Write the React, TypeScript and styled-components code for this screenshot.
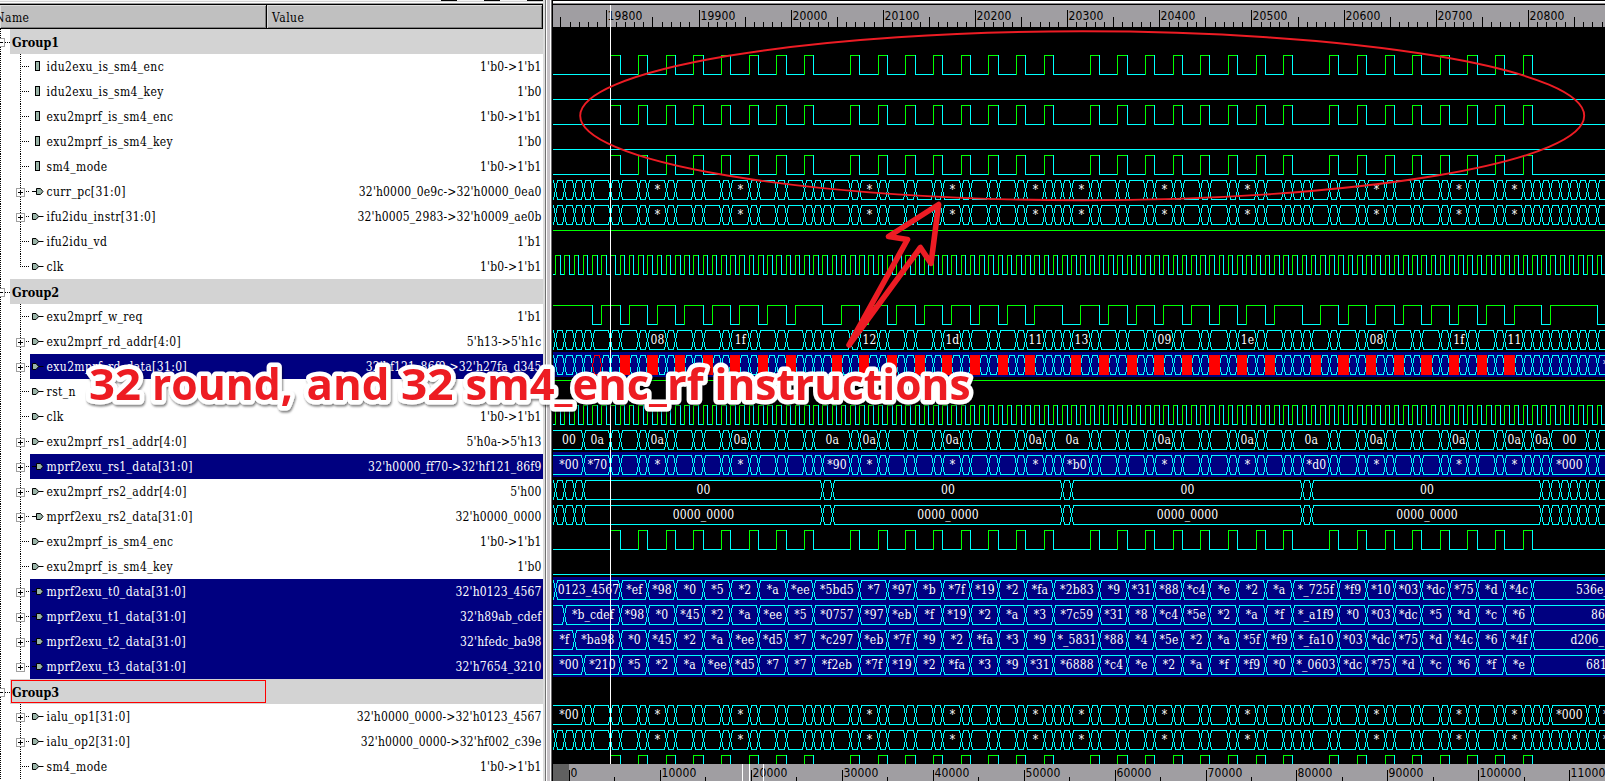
import React from "react";
import styled, { createGlobalStyle } from "styled-components";

const SERIF = '"DejaVu Serif Condensed", "DejaVu Serif", serif';
const SANS = '"DejaVu Sans Condensed", "DejaVu Sans", sans-serif';
const CYAN = "#00ffff";
const GREEN = "#00ff00";
const RED = "#ff0000";
const NAVY = "#000080";

const GlobalStyle = createGlobalStyle`
  html, body { margin: 0; padding: 0; background: #000; overflow: hidden; }
  * { box-sizing: border-box; }
`;

const Window = styled.div`
  position: relative;
  display: flex;
  width: 1605px;
  height: 781px;
  overflow: hidden;
  background: #fff;
`;

/* ---------- signal tree ---------- */

const TreePane = styled.div`
  flex: none;
  width: 543px;
  height: 781px;
  overflow: hidden;
  display: flex;
  flex-direction: column;
  font-family: ${SERIF};
  font-stretch: condensed;
  font-size: 12px;
  color: #000;
`;

const ToolEdge = styled.div`
  flex: none;
  height: 4px;
  display: flex;
  justify-content: flex-end;
  gap: 27px;
  background: linear-gradient(#f4f4f4 0 1px, #d2d2d2 1px 2px, #fff 2px 3px, #9a9a9a 3px 4px);
`;

const ToolStub = styled.span`
  width: 16px;
  height: 1px;
  background: #000;
`;

const Header = styled.div`
  flex: none;
  display: flex;
  height: 25px;
  border-top: 1px solid #000;
  border-bottom: 1px solid #000;
`;

const HeaderCell = styled.div<{ $w: number; $pad: number }>`
  width: ${(p) => p.$w}px;
  padding-left: ${(p) => p.$pad}px;
  line-height: 26px;
  letter-spacing: 0.5px;
  background: #c0c0c0;
  border-right: 1px solid #000;
  box-shadow: inset 1px 1px 0 #dcdcdc, inset -1px -1px 0 #808080;
  white-space: nowrap;
`;

const HeaderText = styled.span<{ $shift?: number }>`
  display: inline-block;
  margin-left: ${(p) => p.$shift ?? 0}px;
`;

const TreeRow = styled.div`
  flex: none;
  display: flex;
  height: 25px;
  background: repeating-linear-gradient(#000 0 1px, transparent 1px 2px) 0 0 / 1px 100% no-repeat;
`;

const GroupGutter = styled.div`
  position: relative;
  flex: none;
  width: 10px;
  overflow: hidden;
  background: repeating-linear-gradient(90deg, transparent 0 1px, #000 1px 2px) 4px 13px / 6px 1px no-repeat;
`;

const GroupTitle = styled.div<{ $active?: boolean }>`
  flex: none;
  width: 255px;
  height: 23px;
  margin-top: 1px;
  margin-left: 1px;
  padding-left: 0;
  line-height: 23px;
  font-weight: 700;
  font-size: 12.5px;
  letter-spacing: 0.05px;
  border: 1px solid ${(p) => (p.$active ? RED : "transparent")};
`;

const GroupBar = styled.div`
  flex: 1;
  display: flex;
  background: #d3d3d3;
`;

const Gutter = styled.div<{ $last?: boolean }>`
  position: relative;
  flex: none;
  width: 30px;
  background:
    repeating-linear-gradient(#000 0 1px, transparent 1px 2px) 20px 0 / 1px ${(p) => (p.$last ? "13px" : "100%")} no-repeat,
    repeating-linear-gradient(90deg, #000 0 1px, transparent 1px 2px) 20px 12px / 9px 1px no-repeat;
`;

const ToggleSvg = styled.svg<{ $left: number }>`
  position: absolute;
  left: ${(p) => p.$left}px;
  top: 9px;
  display: block;
`;

const SignalBody = styled.div<{ $sel?: boolean }>`
  flex: 1;
  display: flex;
  align-items: flex-start;
  padding-right: 1.5px;
  white-space: nowrap;
  background: ${(p) => (p.$sel ? NAVY : "#fff")};
  color: ${(p) => (p.$sel ? "#fff" : "#000")};
`;

const IconSvg = styled.svg`
  flex: none;
  width: 16.6px;
  height: 25px;
`;

const SignalName = styled.span`
  flex: 1;
  line-height: 27px;
  height: 25px;
  letter-spacing: 0.37px;
`;

const SignalValue = styled.span`
  line-height: 27px;
  height: 25px;
  letter-spacing: 0.15px;
`;

const PaneDivider = styled.div`
  flex: none;
  width: 10px;
  height: 781px;
  background: linear-gradient(
    90deg,
    #dcdcdc 0 2px,
    #707070 2px 3px,
    #ffffff 3px 4px,
    #c6c2c6 4px 7px,
    #ffffff 7px 8px,
    #6c6a6c 8px 9px,
    #000 9px 10px
  );
`;

type IconKind = "reg" | "out" | "in";
interface Signal {
  name: string;
  value: string;
  icon: IconKind;
  bus?: boolean;
  sel?: boolean;
}
interface Group {
  name: string;
  active?: boolean;
  signals: Signal[];
}

const s = (name: string, value: string, icon: IconKind, bus = false, sel = false): Signal => ({ name, value, icon, bus, sel });

const GROUPS: Group[] = [
  {
    name: "Group1",
    signals: [
      s("idu2exu_is_sm4_enc", "1'b0->1'b1", "reg"),
      s("idu2exu_is_sm4_key", "1'b0", "reg"),
      s("exu2mprf_is_sm4_enc", "1'b0->1'b1", "reg"),
      s("exu2mprf_is_sm4_key", "1'b0", "reg"),
      s("sm4_mode", "1'b0->1'b1", "reg"),
      s("curr_pc[31:0]", "32'h0000_0e9c->32'h0000_0ea0", "in", true),
      s("ifu2idu_instr[31:0]", "32'h0005_2983->32'h0009_ae0b", "out", true),
      s("ifu2idu_vd", "1'b1", "out"),
      s("clk", "1'b0->1'b1", "out"),
    ],
  },
  {
    name: "Group2",
    signals: [
      s("exu2mprf_w_req", "1'b1", "out"),
      s("exu2mprf_rd_addr[4:0]", "5'h13->5'h1c", "out", true),
      s("exu2mprf_rd_data[31:0]", "32'hf121_86f9->32'h27fa_d345", "out", true, true),
      s("rst_n", "1'b1", "out"),
      s("clk", "1'b0->1'b1", "out"),
      s("exu2mprf_rs1_addr[4:0]", "5'h0a->5'h13", "out", true),
      s("mprf2exu_rs1_data[31:0]", "32'h0000_ff70->32'hf121_86f9", "in", true, true),
      s("exu2mprf_rs2_addr[4:0]", "5'h00", "out", true),
      s("mprf2exu_rs2_data[31:0]", "32'h0000_0000", "in", true),
      s("exu2mprf_is_sm4_enc", "1'b0->1'b1", "out"),
      s("exu2mprf_is_sm4_key", "1'b0", "out"),
      s("mprf2exu_t0_data[31:0]", "32'h0123_4567", "in", true, true),
      s("mprf2exu_t1_data[31:0]", "32'h89ab_cdef", "in", true, true),
      s("mprf2exu_t2_data[31:0]", "32'hfedc_ba98", "in", true, true),
      s("mprf2exu_t3_data[31:0]", "32'h7654_3210", "in", true, true),
    ],
  },
  {
    name: "Group3",
    active: true,
    signals: [
      s("ialu_op1[31:0]", "32'h0000_0000->32'h0123_4567", "out", true),
      s("ialu_op2[31:0]", "32'h0000_0000->32'hf002_c39e", "out", true),
      s("sm4_mode", "1'b0->1'b1", "out"),
    ],
  },
];

const Toggle = ({ open, left }: { open?: boolean; left: number }) => (
  <ToggleSvg $left={left} width="9" height="9" shapeRendering="crispEdges">
    <rect x="0.5" y="0.5" width="8" height="8" fill="#fff" stroke="#a0a0a0" />
    <path d={open ? "M2 4.5H7" : "M2 4.5H7M4.5 2V7"} stroke="#000" />
  </ToggleSvg>
);

const SignalIcon = ({ kind }: { kind: IconKind }) => (
  <IconSvg viewBox="0 0 16.6 25">
    {kind === "reg" && <rect x="5.5" y="7.5" width="4" height="9" fill="#9ab5a8" stroke="#000" />}
    {kind === "out" && (
      <>
        <path d="M8 12.5H13.5" stroke="#000" />
        <path d="M2.5 9.5H6L8.7 12.5L6 15.5H2.5Z" fill="#9ab5a8" stroke="#000" />
      </>
    )}
    {kind === "in" && (
      <>
        <path d="M2 12.5H7" stroke="#000" />
        <path d="M6.5 9.5H10.5L13 12.5L10.5 15.5H6.5Z" fill="#9ab5a8" stroke="#000" />
      </>
    )}
  </IconSvg>
);

/* ---------- wave window ---------- */

const WavePane = styled.div`
  flex: 1;
  min-width: 0;
  display: flex;
  flex-direction: column;
  background: #000;
`;

const WaveEdge = styled.div`
  flex: none;
  height: 5px;
  background: linear-gradient(#000 0 1px, #fff 1px 3px, #8a888a 3px 4px, #000 4px 5px);
`;

const Chart = styled.svg`
  flex: none;
  display: block;
  width: 1052px;
`;

const Overlay = styled.svg`
  position: absolute;
  left: 0;
  top: 0;
  pointer-events: none;
`;

const LEFT = 553;
const RIGHT = 1605;
/* left pixel of the n-th clock edge, counted from the cursor */
const X = (n: number) => Math.floor(610.95 + 9.2155 * n);
const END = 108;

const BLOCKS = [0, 26, 52, 78];
const PULSES = BLOCKS.flatMap((b) => [0, 3, 6, 9, 12, 15, 18, 21].map((o) => b + o));
const WREQ_LOW: [number, number][] = BLOCKS.flatMap((b) => [
  ...[1, 4, 7, 10, 13, 16, 19].map((o) => [b + o, b + o + 1] as [number, number]),
  [b + 23, b === 78 ? b + 24 : b + 25] as [number, number],
]);
WREQ_LOW.unshift([-2, -1]);
WREQ_LOW.push([107, 120]);

const steps = (tail: number[]) => BLOCKS.flatMap((b) => [0, 1, 3, 4, 6, 7, 9, 10, 12, 13, 15, 16, 18, 19, 21, ...tail].map((o) => b + o));
const upTo = (list: number[], last: number) => list.filter((n) => n <= last);
const LEAD = [-6, -5, -4, -3, -2];
const TAIL = [100, 101, 102, 103, 104, 105, 106, 107];
const PC = [...LEAD, ...upTo(steps([22, 23, 24]), 99), ...TAIL];
const RS1A = [-3, ...upTo(steps([22]), 99), 100, 102, 106, 107];
const RS1D = [-3, ...upTo(steps([22, 23]), 99), 100, 101, 102, 106, 107];
const OP1 = [-3, -2, ...upTo(steps([22, 23, 24]), 99), 100, 101, 102, 106, 107];
const RS2 = [-6, -5, -4, -3, 23, 24, 49, 50, 75, 76, 101, 102, 103, 104, 105, 106, 107];
const EVERY = Array.from({ length: 114 }, (_, i) => i - 6);
const ROUNDS = PULSES.map((p) => p + 1);

const WIDE = [4, 13, 27, 36, 45, 50, 59, 68, 82, 91, 97];
const stars = (skip: number[] = []) => Object.fromEntries(WIDE.filter((n) => !skip.includes(n)).map((n) => [n, "*"]));
const listed = (from: number[], text: string) => Object.fromEntries(text.split(" ").map((t, i) => [from[i], t]));
const RD = listed(WIDE, "08 1f 12 1d 11 13 09 1e 08 1f 11");
const RED_CELLS = [...BLOCKS.flatMap((b) => [1, 4, 7, 10, 13, 16, 19, 24].map((o) => b + o))].filter((n) => n < 100);

type Labels = Record<number, string>;
type Wave =
  | { kind: "gap" | "low" | "high" | "clock" | "pulse" | "wreq" }
  | { kind: "bus"; at: number[]; labels: Labels; sel?: boolean; red?: boolean; tail?: [number, string] };

const bus = (at: number[], labels: Labels, extra: { sel?: boolean; red?: boolean; tail?: [number, string] } = {}): Wave => ({ kind: "bus", at, labels, ...extra });
const START = -99;

const T0 = listed([-6, ...ROUNDS], "0123_4567 *ef *98 *0 *5 *2 *a *ee *5bd5 *7 *97 *b *7f *19 *2 *fa *2b83 *9 *31 *88 *c4 *e *2 *a *_725f *f9 *10 *03 *dc *75 *d *4c");
const T1 = listed([-5, ...ROUNDS], "*b_cdef *98 *0 *45 *2 *a *ee *5 *0757 *97 *eb *f *19 *2 *a *3 *7c59 *31 *8 *c4 *5e *2 *a *f *_a1f9 *0 *03 *dc *5 *d *c *6");
const T2 = listed([START, -4, ...ROUNDS], "*f *ba98 *0 *45 *2 *a *ee *d5 *7 *c297 *eb *7f *9 *2 *fa *3 *9 *_5831 *88 *4 *5e *2 *a *5f *f9 *_fa10 *03 *dc *75 *d *4c *6 *4f");
const T3 = listed([START, -3, ...ROUNDS], "*00 *210 *5 *2 *a *ee *d5 *7 *7 *f2eb *7f *19 *2 *fa *3 *9 *31 *6888 *c4 *e *2 *a *f *f9 *0 *_0603 *dc *75 *d *c *6 *f *e");

const WAVES: Wave[] = [
  { kind: "gap" },
  { kind: "pulse" },
  { kind: "low" },
  { kind: "pulse" },
  { kind: "low" },
  { kind: "pulse" },
  bus(PC, stars()),
  bus(PC, stars()),
  { kind: "high" },
  { kind: "clock" },
  { kind: "gap" },
  { kind: "wreq" },
  bus(PC, RD),
  bus(EVERY, {}, { sel: true, red: true, tail: [1603, "*"] }),
  { kind: "high" },
  { kind: "clock" },
  bus(RS1A, {
    [START]: "00", [-3]: "0a", 4: "0a", 13: "0a", 22: "0a", 27: "0a", 36: "0a", 45: "0a", 48: "0a", 59: "0a",
    68: "0a", 74: "0a", 82: "0a", 91: "0a", 97: "0a", 100: "0a", 102: "00",
  }),
  bus(RS1D, { ...stars([50]), [START]: "*00", [-3]: "*70", 23: "*90", 49: "*b0", 75: "*d0", 102: "*000" }, { sel: true }),
  bus(RS2, { [-3]: "00", 24: "00", 50: "00", 76: "00" }),
  bus(RS2, { [-3]: "0000_0000", 24: "0000_0000", 50: "0000_0000", 76: "0000_0000" }),
  { kind: "pulse" },
  { kind: "low" },
  bus([-6, ...ROUNDS], T0, { sel: true, tail: [1576, "536e_"] }),
  bus([-5, ...ROUNDS], T1, { sel: true, tail: [1591, "86"] }),
  bus([-4, ...ROUNDS], T2, { sel: true, tail: [1570.5, "d206_"] }),
  bus([-3, ...ROUNDS], T3, { sel: true, tail: [1586, "681"] }),
  { kind: "gap" },
  bus(OP1, { ...stars(), [START]: "*00", 102: "*000" }, { tail: [1603, "*"] }),
  bus(PC, stars(), { tail: [1603, "*"] }),
  { kind: "pulse" },
];

const h = (x0: number, x1: number, y: number) => `M${x0} ${y + 0.5}H${x1 + 1}`;
const v = (x: number, y0: number, y1: number) => `M${x + 0.5} ${y0}V${y1 + 1}`;

/* upper and lower rail of a binary trace, with rising and falling edges in their own colours */
const binary = (highs: [number, number][], top: number) => {
  const bot = top + 19;
  let green = "";
  let cyan = "";
  let pos = LEFT;
  highs.forEach(([a, b]) => {
    if (a > pos) cyan += h(pos, a, bot);
    if (b < RIGHT) cyan += v(b, top, bot);
    green += h(Math.max(a, LEFT), b - 1, top);
    if (a > LEFT) green += v(a, top, bot);
    pos = b;
  });
  if (pos < RIGHT) cyan += h(pos, RIGHT, bot);
  return { green, cyan };
};

/* side of a bus cell: dir +1 is a left side, -1 a right side */
const side = (x: number, top: number, dir: number) =>
  v(x + 2 * dir, top + 1, top + 2) +
  v(x + dir, top + 3, top + 7) +
  v(x, top + 8, top + 11) +
  v(x + dir, top + 12, top + 16) +
  v(x + 2 * dir, top + 17, top + 18);

const cellPath = (a: number, b: number, top: number) =>
  h(a <= LEFT ? LEFT : a + 2, b - 2, top) +
  h(a <= LEFT ? LEFT : a + 2, b - 2, top + 19) +
  (a <= LEFT ? "" : side(a, top, 1)) +
  side(b, top, -1);

const Label = styled.text`
  font-family: ${SERIF};
  font-stretch: condensed;
  font-size: 12px;
  letter-spacing: 0.13px;
  fill: #fff;
`;

const RulerText = styled.text`
  font-family: ${SANS};
  font-stretch: condensed;
  font-size: 12px;
  fill: #000;
`;

const Trace = ({ wave, y }: { wave: Wave; y: number }) => {
  const top = y + 3;
  if (wave.kind === "gap") return null;
  if (wave.kind === "low") return <path d={h(LEFT, RIGHT, top + 19)} stroke={CYAN} />;
  if (wave.kind === "high") return <path d={h(LEFT, RIGHT, top)} stroke={GREEN} />;
  if (wave.kind === "bus") {
    const cells = wave.at.map((n, i) => ({ n, a: X(n), b: i + 1 < wave.at.length ? X(wave.at[i + 1]) : RIGHT + 20 }));
    cells.unshift({ n: START, a: LEFT, b: X(wave.at[0]) });
    return (
      <>
        {wave.sel && <rect x={LEFT} y={y} width={RIGHT - LEFT} height={25} fill={NAVY} />}
        <path d={cells.map((c) => cellPath(c.a, c.b, top)).join("")} stroke={CYAN} />
        {wave.red && (
          <>
            <path d={cellPath(X(-2), X(-1), top)} stroke={RED} />
            {RED_CELLS.map((n) => (
              <rect key={n} x={X(n)} y={top} width={X(n + 1) - X(n) + 1} height={20} fill={RED} />
            ))}
          </>
        )}
        {cells.map(
          (c) =>
            wave.labels[c.n] && (
              <Label key={c.n} x={(c.a + c.b) / 2 + 0.9} y={top + 14} textAnchor="middle">
                {wave.labels[c.n]}
              </Label>
            ),
        )}
        {wave.tail && (
          <Label x={wave.tail[0]} y={top + 14}>
            {wave.tail[1]}
          </Label>
        )}
      </>
    );
  }
  let highs: [number, number][];
  if (wave.kind === "clock") {
    highs = Array.from({ length: END + 6 }, (_, i) => [X(i - 6), X(i - 5.5)] as [number, number]);
  } else if (wave.kind === "pulse") {
    highs = PULSES.map((n) => [X(n), X(n + 1)] as [number, number]);
  } else {
    highs = WREQ_LOW.map(([a], i) => [i ? X(WREQ_LOW[i - 1][1]) : LEFT, X(a)] as [number, number]);
  }
  const p = binary(highs, top);
  return (
    <>
      <path d={p.cyan} stroke={CYAN} />
      <path d={p.green} stroke={GREEN} />
    </>
  );
};

const TimeRuler = () => {
  const ticks = Array.from({ length: 114 }, (_, i) => i - 5).map((n) => ({ n, x: Math.floor(606.9 + 9.2155 * n) }));
  return (
    <Chart height={22} viewBox="553 5 1052 22" shapeRendering="crispEdges">
      <rect x={LEFT} y={5} width={1052} height={22} fill="#a09ea2" />
      <path d={ticks.map(({ n, x }) => v(x, n % 10 === 0 ? 10 : n % 5 === 0 ? 17 : 22, 26)).join("")} stroke="#000" />
      {ticks
        .filter(({ n }) => n % 10 === 0)
        .map(({ n, x }) => (
          <RulerText key={n} x={x + 1.6} y={20} textLength={34.8}>
            {19800 + n * 10}
          </RulerText>
        ))}
    </Chart>
  );
};

const OverviewRuler = () => {
  const ticks = Array.from({ length: 23 }, (_, i) => ({ n: i, x: Math.floor(569.3 + 45.48 * i) }));
  return (
    <Chart height={17} viewBox="553 764 1052 17" shapeRendering="crispEdges">
      <rect x={LEFT} y={764} width={1052} height={17} fill="#a09ea2" />
      <rect x={LEFT} y={764} width={16} height={17} fill="#606060" />
      <path d={ticks.map(({ n, x }) => v(x, n % 2 ? 777 : 770, 780)).join("")} stroke="#000" />
      {ticks
        .filter(({ n }) => n % 2 === 0)
        .map(({ n, x }) => (
          <RulerText key={n} x={x + 1.6} y={777} textLength={n === 0 ? undefined : 6.95 * String(n * 5000).length}>
            {n * 5000}
          </RulerText>
        ))}
      <path d={v(742, 764, 780) + v(749, 764, 780) + v(763, 764, 780)} stroke="#fff" />
    </Chart>
  );
};

/* each word of the caption with its start and advance */
const CAPTION: [string, number, number][] = [
  ["32", 89, 52],
  ["round,", 152, 141],
  ["and", 306.5, 83],
  ["32", 401, 52.5],
  ["sm4_enc_rf", 465.5, 238],
  ["instructions", 714.5, 256],
];

const Caption = styled.text`
  font-family: "Open Sans", "Noto Sans", sans-serif;
  font-weight: 700;
  font-size: 43.5px;
  fill: #ed1c24;
  stroke: #fff;
  stroke-width: 9px;
  stroke-linejoin: round;
  paint-order: stroke;
`;

const Annotations = () => (
  <Overlay width="1605" height="781">
    <defs>
      <filter id="lift" x="-5%" y="-30%" width="110%" height="160%">
        <feDropShadow dx="1" dy="2" stdDeviation="1.3" floodColor="#000" floodOpacity="0.5" />
      </filter>
    </defs>
    <ellipse cx="1082.2" cy="115.8" rx="502" ry="84.5" fill="none" stroke="#ed1c24" strokeWidth="1.9" />
    <path
      d="M849 345L907.5 239.5L888.5 236.5L938.6 204.5L931 263.5L920.4 247.5Z"
      fill="none"
      stroke="#ed1c24"
      strokeWidth="5.6"
      strokeLinejoin="round"
    />
    <g filter="url(#lift)">
      {CAPTION.map(([word, x, w]) => (
        <Caption key={x} x={x} y={400} textLength={w} lengthAdjust="spacingAndGlyphs">
          {word}
        </Caption>
      ))}
    </g>
  </Overlay>
);

export default function App() {
  return (
    <>
      <GlobalStyle />
      <Window>
        <TreePane>
          <ToolEdge>
            <ToolStub />
            <ToolStub />
            <ToolStub />
          </ToolEdge>
          <Header>
            <HeaderCell $w={267} $pad={0}>
              <HeaderText $shift={-5}>Name</HeaderText>
            </HeaderCell>
            <HeaderCell $w={276} $pad={5}>
              <HeaderText>Value</HeaderText>
            </HeaderCell>
          </Header>
          {GROUPS.map((g) => (
            <React.Fragment key={g.name}>
              <TreeRow>
                <GroupGutter>
                  <Toggle open left={-4} />
                </GroupGutter>
                <GroupBar>
                  <GroupTitle $active={g.active}>{g.name}</GroupTitle>
                </GroupBar>
              </TreeRow>
              {g.signals.map((sig, i) => (
                <TreeRow key={i}>
                  <Gutter $last={i === g.signals.length - 1 && g.name !== "Group3"}>{sig.bus && <Toggle left={16} />}</Gutter>
                  <SignalBody $sel={sig.sel}>
                    <SignalIcon kind={sig.icon} />
                    <SignalName>{sig.name}</SignalName>
                    <SignalValue>{sig.value}</SignalValue>
                  </SignalBody>
                </TreeRow>
              ))}
            </React.Fragment>
          ))}
        </TreePane>
        <PaneDivider />
        <WavePane>
          <WaveEdge />
          <TimeRuler />
          <Chart height={737} viewBox="553 27 1052 737" shapeRendering="crispEdges" fill="none">
            {WAVES.map((w, i) => (
              <Trace key={i} wave={w} y={27 + i * 25} />
            ))}
          </Chart>
          <OverviewRuler />
        </WavePane>
        <Overlay width="1605" height="781" shapeRendering="crispEdges">
          <path d={v(610, 5, 763)} stroke="#fff" />
        </Overlay>
        <Annotations />
      </Window>
    </>
  );
}
